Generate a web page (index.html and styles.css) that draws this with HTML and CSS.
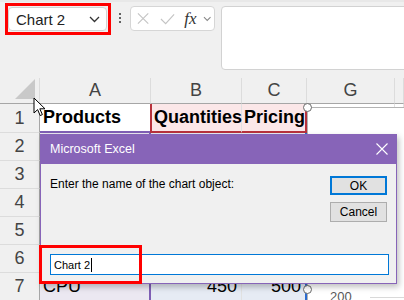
FILE: index.html
```html
<!DOCTYPE html>
<html lang="en">
<head>
    <meta charset="UTF-8">
    <meta name="viewport" content="width=device-width, initial-scale=1.0">
    <title>Chart name</title>
    <link rel="stylesheet" href="styles.css">
</head>
<body>
    <div class="toolbar">
        <div class="mark namebox-mark">
            <div class="namebox">
                <span>Chart 2</span>
                <svg width="11" height="7" viewBox="0 0 11 7"><path d="M1 1l4.5 4.5L10 1" fill="none" stroke="#333" stroke-width="1.3"/></svg>
            </div>
        </div>
        <div class="more"><i></i><i></i><i></i></div>
        <div class="fx-buttons">
            <svg width="13" height="13" viewBox="0 0 13 13"><path d="M1 1l11 11M12 1L1 12" stroke="#c4c4c4" stroke-width="1.2"/></svg>
            <svg width="16" height="12" viewBox="0 0 16 12"><path d="M1 6l5 5L15 1" fill="none" stroke="#c4c4c4" stroke-width="1.2"/></svg>
            <span class="fx">fx</span>
            <svg width="9" height="6" viewBox="0 0 9 6"><path d="M1 1l3.5 3.5L8 1" fill="none" stroke="#888" stroke-width="1.1"/></svg>
        </div>
        <div class="formula"></div>
    </div>

    <div class="sheet">
        <div class="hd corner"><span class="tri"></span></div>
        <div class="hd">A</div>
        <div class="hd">B</div>
        <div class="hd">C</div>
        <div class="hd">G</div>
        <div class="hd"></div>

        <div class="hd row">1</div>
        <div class="cell bold cat-top">Products</div>
        <div class="cell bold name name-left">Quantities</div>
        <div class="cell bold name name-right">Pricing</div>
        <div class="cell"></div>
        <div class="cell"></div>

        <div class="hd row">2</div>
        <div class="cell cat"></div><div class="cell val"></div><div class="cell val val-right"></div><div class="cell"></div><div class="cell"></div>
        <div class="hd row">3</div>
        <div class="cell cat"></div><div class="cell val"></div><div class="cell val val-right"></div><div class="cell"></div><div class="cell"></div>
        <div class="hd row">4</div>
        <div class="cell cat"></div><div class="cell val"></div><div class="cell val val-right"></div><div class="cell"></div><div class="cell"></div>
        <div class="hd row">5</div>
        <div class="cell cat"></div><div class="cell val"></div><div class="cell val val-right"></div><div class="cell"></div><div class="cell"></div>
        <div class="hd row">6</div>
        <div class="cell cat"></div><div class="cell val"></div><div class="cell val val-right"></div><div class="cell"></div><div class="cell"></div>
        <div class="hd row">7</div>
        <div class="cell cat">CPU</div>
        <div class="cell val num">450</div>
        <div class="cell val val-right num">500</div>
        <div class="cell"></div>
        <div class="cell"></div>
    </div>

    <div class="chart">
        <span class="handle top"></span>
        <span class="handle bottom"></span>
        <span class="axis">200</span>
        <span class="gridline"></span>
    </div>

    <div class="dialog">
        <div class="dialog-title">
            <span>Microsoft Excel</span>
            <svg width="12" height="12" viewBox="0 0 12 12"><path d="M0.5 0.5l11 11M11.5 0.5l-11 11" stroke="#fff" stroke-width="1.1"/></svg>
        </div>
        <div class="dialog-body">
            <div class="dialog-top">
                <p>Enter the name of the chart object:</p>
                <div class="dialog-buttons">
                    <button class="btn default">OK</button>
                    <button class="btn">Cancel</button>
                </div>
            </div>
            <div class="dialog-input">Chart 2<span class="caret"></span></div>
        </div>
    </div>

    <div class="mark input-mark"></div>

    <svg class="cursor" width="13" height="20" viewBox="0 0 13 20"><path d="M1 1v15l3.6-3.4 2.6 6 2.2-1-2.6-5.8H12z" fill="#fff" stroke="#000" stroke-width="1"/></svg>
</body>
</html>
```

FILE: styles.css
```css
body {
    margin: 0;
    width: 404px;
    height: 300px;
    overflow: hidden;
    position: relative;
    font-family: "Liberation Sans", Arial, sans-serif;
    background-color: #ffffff;
}
.toolbar {
    height: 78px;
    box-sizing: border-box;
    display: flex;
    align-items: flex-start;
    padding: 3px 0 0 5px;
    background-color: #f0f0f0;
    border-top: 2px solid #e8e8e8;
}
.mark {
    border: 3px solid #ff0000;
    box-sizing: border-box;
}
.namebox-mark {
    width: 106px;
    height: 32px;
    margin-top: -2px;
    padding: 1px 1px 1px 0;
}
.namebox {
    height: 100%;
    box-sizing: border-box;
    background-color: #ffffff;
    border: 1px solid #d2d2d2;
    border-radius: 4px;
    display: flex;
    align-items: center;
    justify-content: space-between;
    padding: 0 6px 0 7px;
    font-size: 15px;
    color: #222;
}
.more {
    width: 12px;
    margin: 8px 0 0 3px;
    display: flex;
    flex-direction: column;
    align-items: center;
    gap: 2px;
}
.more i {
    width: 2px;
    height: 2px;
    background-color: #333;
    border-radius: 1px;
}
.fx-buttons {
    width: 85px;
    height: 25px;
    box-sizing: border-box;
    margin: 1px 0 0 4px;
    display: flex;
    align-items: center;
    padding: 0 3px 0 6px;
    gap: 10px;
    background-color: #ffffff;
    border: 1px solid #d6d6d6;
    border-radius: 4px;
}
.fx-buttons svg:nth-child(2) {
    margin-left: 1px;
}
.fx {
    font-family: "Liberation Serif", serif;
    font-style: italic;
    font-size: 17px;
    color: #333;
    margin-left: -1px;
}
.fx-buttons svg:last-child {
    margin-left: -4px;
}
.formula {
    flex: 1;
    height: 62px;
    margin: 1px -6px 0 6px;
    background-color: #ffffff;
    border: 1px solid #d2d2d2;
    border-radius: 4px;
}
.sheet {
    display: grid;
    grid-template-columns: 40px 111px 91px 65px 88px 1fr;
    grid-template-rows: 26px 29px repeat(6, 28px);
    font-size: 18px;
}
.hd {
    background-color: #f0f0f0;
    color: #444;
    display: flex;
    align-items: center;
    justify-content: center;
    border-right: 1px solid #dcdcdc;
    border-bottom: 1px solid #a6a6a6;
    box-sizing: border-box;
}
.hd.row {
    border-bottom: 1px solid #dcdcdc;
    border-right: 1px solid #a6a6a6;
}
.corner {
    position: relative;
}
.tri {
    position: absolute;
    right: 4px;
    bottom: 4px;
    width: 0;
    height: 0;
    border-left: 20px solid transparent;
    border-bottom: 20px solid #c9c9c9;
}
.cell {
    border-right: 1px solid #e1e1e1;
    border-bottom: 1px solid #e1e1e1;
    box-sizing: border-box;
    display: flex;
    align-items: center;
    padding: 0 3px;
    white-space: nowrap;
    overflow: hidden;
    color: #000;
}
.bold {
    font-weight: bold;
}
.cat-top {
    border-bottom: 2px solid #7f5fb5;
}
.name {
    background-color: #fbe7e8;
    border-bottom: 2px solid #b8323c;
    overflow: visible;
    padding-left: 2px;
}
.name-left {
    border-left: 2px solid #b8323c;
    margin-left: -1px;
}
.name-right {
    border-right: 2px solid #b8323c;
    overflow: hidden;
}
.cat {
    background-color: #ebe8f1;
    border-right: 2px solid #7f5fb5;
}
.val {
    background-color: #e6ebf4;
}
.val-right {
    border-right: 2px solid #2b6cd0;
}
.num {
    justify-content: flex-end;
    padding-right: 4px;
}
.chart {
    position: absolute;
    left: 307px;
    top: 107px;
    right: 0;
    bottom: 0;
    background-color: #ffffff;
    border-left: 1px solid #b3b3b3;
    border-top: 1px solid #b3b3b3;
}
.handle {
    position: absolute;
    left: -5px;
    width: 7px;
    height: 7px;
    border: 1px solid #6a6a6a;
    border-radius: 50%;
    background-color: #ffffff;
}
.handle.top {
    top: -5px;
}
.handle.bottom {
    top: 177px;
}
.axis {
    position: absolute;
    left: 22px;
    top: 181px;
    font-size: 13px;
    color: #595959;
}
.gridline {
    position: absolute;
    left: 62px;
    right: 0;
    top: 189px;
    border-top: 1px solid #d9d9d9;
}
.dialog {
    position: absolute;
    left: 40px;
    top: 134px;
    width: 357px;
    box-shadow: 2px 3px 6px rgba(0, 0, 0, 0.25);
}
.dialog-title {
    height: 30px;
    background-color: #8764b8;
    color: #ffffff;
    display: flex;
    align-items: center;
    justify-content: space-between;
    padding: 0 9px 0 10px;
    font-size: 12.5px;
}
.dialog-body {
    height: 120px;
    box-sizing: border-box;
    background-color: #f0f0f0;
    border: 1px solid #8764b8;
    border-top: none;
    padding: 12px 8px 0 9px;
    font-size: 12px;
    color: #000;
}
.dialog-top {
    display: flex;
    justify-content: space-between;
}
.dialog-top p {
    margin: 0;
    padding-top: 1px;
}
.dialog-buttons {
    display: flex;
    flex-direction: column;
    gap: 7px;
    width: 57px;
    margin-right: 1px;
}
.btn {
    height: 20px;
    padding: 0;
    font-family: "Liberation Sans", Arial, sans-serif;
    font-size: 12px;
    color: #000;
    background-color: #e1e1e1;
    border: 1px solid #adadad;
}
.btn.default {
    height: 19px;
    border: 2px solid #0078d7;
}
.dialog-input {
    margin-top: 32px;
    height: 21px;
    width: 339px;
    box-sizing: border-box;
    background-color: #ffffff;
    border: 1px solid #0078d7;
    display: flex;
    align-items: center;
    padding-left: 3px;
    font-size: 11px;
}
.caret {
    width: 1px;
    height: 14px;
    background-color: #000;
    margin-left: 1px;
}
.input-mark {
    position: absolute;
    left: 39px;
    top: 245px;
    width: 103px;
    height: 39px;
}
.cursor {
    position: absolute;
    left: 33px;
    top: 97px;
}
```
